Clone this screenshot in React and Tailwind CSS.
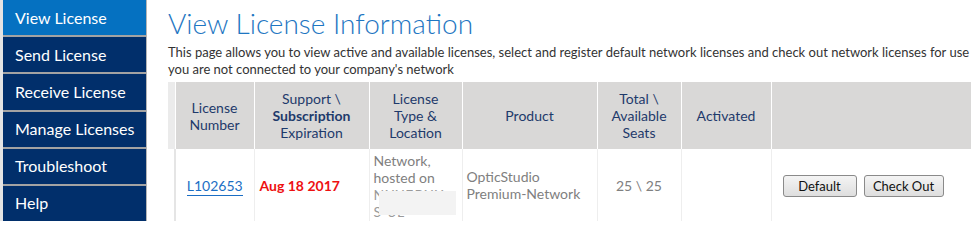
import React from 'react';

const navItems = ['View License', 'Send License', 'Receive License', 'Manage Licenses', 'Troubleshoot', 'Help'];

const headers = [
  { key: 'num', label: <>License<br />Number</> },
  { key: 'sub', label: <>Support \<br /><b className="font-bold">Subscription</b><br />Expiration</> },
  { key: 'type', label: <>License<br />Type &amp;<br />Location</> },
  { key: 'prod', label: 'Product' },
  { key: 'seats', label: <>Total \<br />Available<br />Seats</> },
  { key: 'act', label: 'Activated' },
  { key: 'btn', label: '' },
];

const Sidebar = () => (
  <div className="w-[147px] shrink-0 flex flex-col bg-[#a3a3a3] border-l-[3px] border-[#e4e4e4] border-r border-r-[#b5b5b5] gap-[2px]">
    {navItems.map((item, i) => (
      <div
        key={item}
        className={`h-[36px] pl-[12px] flex items-center text-white text-[16px] ${i === 0 ? 'bg-[#0571c1]' : 'bg-[#012f6b]'}`}
      >
        {item}
      </div>
    ))}
  </div>
);

const App = () => {
  return (
    <div className="flex w-[971px] h-[221px] overflow-hidden bg-white" style={{ fontFamily: 'Lato, "Open Sans", sans-serif' }}>
      <Sidebar />
      <div className="flex-1 pl-[21px] pt-[6px] min-w-0">
        <h1 className="text-[28px] leading-[34px] text-[#1e76c2] font-light whitespace-nowrap">View License Information</h1>
        <p className="mt-[4px] text-[13px] leading-[17px] text-[#333333] whitespace-nowrap">
          This page allows you to view active and available licenses, select and register default network licenses and check out network licenses for use
          <br />
          you are not connected to your company's network
        </p>
        <table className="mt-[4px] table-fixed border-collapse w-[803px] text-[14px] leading-[17px]">
          <colgroup>
            <col className="w-[7px]" />
            <col className="w-[79px]" />
            <col className="w-[115px]" />
            <col className="w-[93px]" />
            <col className="w-[135px]" />
            <col className="w-[84px]" />
            <col className="w-[90px]" />
            <col />
          </colgroup>
          <thead>
            <tr className="h-[67px] bg-[#d9d8d7] text-[#1e3a6b]">
              <th className="bg-[#ebebeb] p-0"></th>
              {headers.map((h) => (
                <th key={h.key} className="font-normal text-center align-middle border-l border-white px-1">
                  {h.label}
                </th>
              ))}
            </tr>
          </thead>
          <tbody>
            <tr className="h-[72px] text-[#808080] text-[14px]">
              <td className="border-r-[2px] border-[#e5e5e5] p-0"></td>
              <td className="text-center align-middle">
                <a className="text-[#1b6ec4] border-b border-[#1b6ec4] pb-[1px]" href="#">L102653</a>
              </td>
              <td className="border-l border-[#eeeeee] pl-[5px] align-middle text-[#ee1111] font-bold">Aug 18 2017</td>
              <td className="border-l border-[#eeeeee] p-0 align-top">
                <div className="relative h-[72px] overflow-hidden pl-[4px] pt-[3px] whitespace-nowrap">
                  <div>Network,</div>
                  <div>hosted on</div>
                  <div className="tracking-[1px] text-[#9a9a9a]">NXXEBXX</div>
                  <div className="tracking-[1px] text-[#9a9a9a]">S-SL</div>
                  <div className="absolute left-[9px] top-[42px] w-[77px] h-[24px] bg-[#f3f3f3]"></div>
                </div>
              </td>
              <td className="border-l border-[#eeeeee] pl-[4px] align-middle">
                OpticStudio<br />Premium-Network
              </td>
              <td className="border-l border-[#eeeeee] text-center align-middle">25 \ 25</td>
              <td className="border-l border-[#eeeeee]"></td>
              <td className="border-l border-[#eeeeee] align-middle">
                <div className="flex items-center gap-[7px] pl-[11px] pt-[2px]">
                  <button className="w-[74px] h-[22px] border border-[#8a8a8a] rounded-[3px] bg-gradient-to-b from-[#f4f4f4] to-[#dedede] text-[#111] text-[13px] leading-none">
                    Default
                  </button>
                  <button className="w-[80px] h-[22px] border border-[#8a8a8a] rounded-[3px] bg-gradient-to-b from-[#f4f4f4] to-[#dedede] text-[#111] text-[13px] leading-none">
                    Check Out
                  </button>
                </div>
              </td>
            </tr>
          </tbody>
        </table>
      </div>
    </div>
  );
};

export default App;
